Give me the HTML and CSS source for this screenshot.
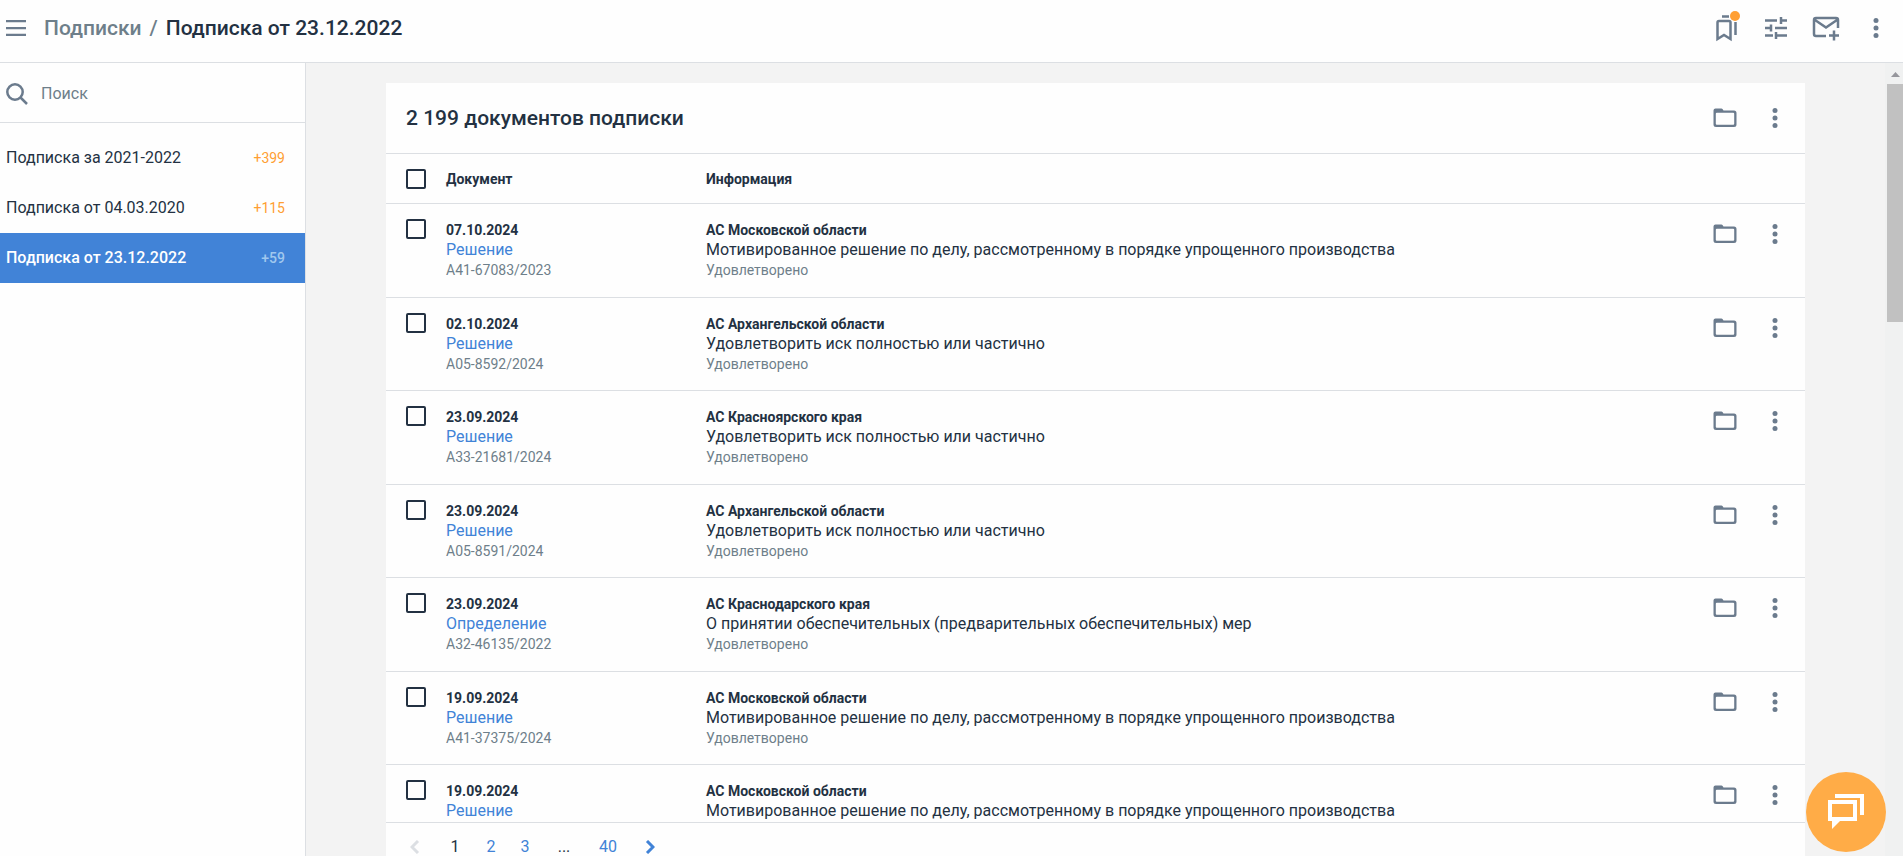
FILE: index.html
```html
<!DOCTYPE html>
<html lang="ru">
<head>
  <meta charset="UTF-8">
  <meta name="viewport" content="width=device-width, initial-scale=1.0">
  <title>Подписка от 23.12.2022</title>
  <link rel="stylesheet" href="styles.css">
</head>
<body>
  <!-- Shared icons -->
  <svg class="sprite" width="0" height="0" aria-hidden="true">
    <symbol id="folder" viewBox="0 0 24 20">
      <path d="M2.500 .5h6q1 0 2 2h10.500a2.500 2.500 0 0 1 2.500 2.500v11.500a2.500 2.500 0 0 1-2.500 2.500H3A2.500 2.500 0 0 1 .5 16.500v-14a2 2 0 0 1 2-2zM2.800 6v9.700q0 1 1 1h16.400q1 0 1-1V5.800q0-1-1-1H3.800q-1 0-1 1z" fill-rule="evenodd"/>
    </symbol>
    <symbol id="dots" viewBox="0 0 6 20">
      <circle cx="3" cy="2.500" r="2.500"/><circle cx="3" cy="10" r="2.500"/><circle cx="3" cy="17.500" r="2.500"/>
    </symbol>
  </svg>

  <header class="topbar">
    <button class="menu-btn" aria-label="Меню">
      <svg width="20" height="16" viewBox="0 0 20 16"><path d="M0 0h20v2.300H0zM0 7h20v2.300H0zM0 13.700h20V16H0z"/></svg>
    </button>
    <nav class="breadcrumbs">
      <a href="#">Подписки</a>
      <span class="slash">/</span>
      <h1>Подписка от 23.12.2022</h1>
    </nav>
    <div class="topbar-actions">
      <button class="icon-btn bookmarks" aria-label="Закладки">
        <svg width="22" height="28" viewBox="0 0 22 28" class="line"><path d="M2.500 8.500q0-1.500 1.500-1.500h10q1.500 0 1.500 1.500v16.500l-6.500-4-6.500 4zM7 2.500h7M20.500 8v13"/></svg>
        <span class="badge"></span>
      </button>
      <button class="icon-btn" aria-label="Настройки">
        <svg width="24" height="24" viewBox="0 0 24 24" class="line"><path d="M1 4.500h12M17 1v7M17 4.500h6M1 12h6M7 8.500v7M11 12h12M1 19.500h8M12 16v7M12 19.500h11"/></svg>
      </button>
      <button class="icon-btn" aria-label="Новая рассылка">
        <svg width="28" height="26" viewBox="0 0 28 26" class="line"><path d="M14 21H4q-2 0-2-2V5q0-2 2-2h20q2 0 2 2v8M3 5l11 7.500L25 5M22 15.500v10M17 20.500h10"/></svg>
      </button>
      <button class="icon-btn" aria-label="Ещё"><svg width="6" height="20"><use href="#dots"/></svg></button>
    </div>
  </header>

  <div class="layout">
    <aside class="sidebar">
      <label class="search">
        <svg width="22" height="22" viewBox="0 0 22 22" class="line"><circle cx="9" cy="9" r="7.700"/><path d="M14.500 14.500L21 21"/></svg>
        <input type="text" placeholder="Поиск" aria-label="Поиск">
      </label>
      <nav class="subs">
        <a href="#" class="sub">Подписка за 2021-2022 <span class="count">+399</span></a>
        <a href="#" class="sub">Подписка от 04.03.2020 <span class="count">+115</span></a>
        <a href="#" class="sub active">Подписка от 23.12.2022 <span class="count">+59</span></a>
      </nav>
    </aside>

    <main class="content">
      <section class="card">
        <div class="card-head">
          <h2>2 199 документов подписки</h2>
          <div class="actions">
            <button class="icon-btn" aria-label="В папку"><svg width="24" height="20"><use href="#folder"/></svg></button>
            <button class="icon-btn" aria-label="Ещё"><svg width="6" height="20"><use href="#dots"/></svg></button>
          </div>
        </div>
        <div class="table-wrap">
          <table class="docs">
            <thead>
              <tr>
                <th class="col-check"><input type="checkbox" aria-label="Выбрать все"></th>
                <th class="col-doc">Документ</th>
                <th>Информация</th>
                <th class="col-actions"></th>
              </tr>
            </thead>
            <tbody id="docs"></tbody>
          </table>
        </div>
        <nav class="pager">
          <button class="arrow" disabled aria-label="Назад"><svg width="10" height="14" viewBox="0 0 10 14"><path d="M8 1L2 7l6 6"/></svg></button>
          <span class="current">1</span>
          <a href="#">2</a>
          <a href="#">3</a>
          <span class="gap">...</span>
          <a href="#" class="last">40</a>
          <button class="arrow" aria-label="Вперёд"><svg width="10" height="14" viewBox="0 0 10 14"><path d="M2 1l6 6-6 6"/></svg></button>
        </nav>
      </section>
    </main>

    <div class="scrollbar" aria-hidden="true">
      <svg width="16" height="20" viewBox="0 0 16 20"><path d="M4 13l4.500-5 4.500 5z"/></svg>
      <div class="thumb"></div>
    </div>
  </div>

  <button class="chat" aria-label="Чат">
    <svg width="36" height="36" viewBox="0 0 36 36"><path d="M0 6h29v21H12l-8 8v-8H0zM4 10v13h21V10zM7 0h29v21h-4V4H7z" fill-rule="evenodd"/></svg>
  </button>

  <script src="script.js"></script>
</body>
</html>
```

FILE: styles.css
```css
:root {
  --text: #233142;
  --muted: #6e7f8a;
  --icon: #6b7b8d;
  --blue: #4183d7;
  --orange: #ff9f33;
  --line: #dcdfe3;
}

* {
  margin: 0;
  padding: 0;
  box-sizing: border-box;
}

body {
  height: 100vh;
  display: flex;
  flex-direction: column;
  overflow: hidden;
  font-family: Roboto, "Liberation Sans", sans-serif;
  font-size: 16px;
  line-height: 20px;
  color: var(--text);
  background: #fefefe;
}

a {
  color: var(--blue);
  text-decoration: none;
}

button {
  border: none;
  background: none;
  cursor: pointer;
}

svg {
  display: block;
  fill: var(--icon);
}

.sprite {
  position: absolute;
}

svg.line {
  fill: none;
  stroke: var(--icon);
  stroke-width: 2.5;
}

/* Top bar */
.topbar {
  display: flex;
  align-items: center;
  height: 63px;
  padding: 0 2px 6px 6px;
  border-bottom: 1px solid var(--line);
}

.breadcrumbs {
  display: flex;
  gap: 8px;
  margin-left: 18px;
  font-size: 21px;
  font-weight: 500;
  line-height: 24px;
}

.breadcrumbs a,
.slash {
  color: var(--muted);
}

.breadcrumbs h1 {
  font-size: 21px;
  font-weight: 500;
}

.topbar-actions,
.actions {
  display: flex;
  margin-left: auto;
}

.icon-btn {
  display: flex;
  align-items: center;
  justify-content: center;
  width: 50px;
  height: 40px;
}

.bookmarks {
  position: relative;
}

.badge {
  position: absolute;
  top: 3px;
  right: 11px;
  width: 10px;
  height: 10px;
  border-radius: 50%;
  background: var(--orange);
}

.layout {
  flex: 1;
  display: flex;
  min-height: 0;
}

/* Sidebar */
.sidebar {
  width: 306px;
  border-right: 1px solid var(--line);
}

.search {
  display: flex;
  align-items: center;
  gap: 13px;
  height: 60px;
  padding: 2px 6px 0;
  border-bottom: 1px solid var(--line);
}

.search input {
  flex: 1;
  min-width: 0;
  border: none;
  outline: none;
  background: none;
  font: inherit;
}

.search input::placeholder {
  color: var(--muted);
}

.subs {
  padding-top: 10px;
}

.sub {
  display: flex;
  align-items: baseline;
  justify-content: space-between;
  height: 50px;
  padding: 15px 20px 0 6px;
  color: var(--text);
}

.count {
  font-size: 14px;
  color: var(--orange);
}

.sub.active {
  background: var(--blue);
  color: #fff;
  font-weight: 500;
}

.active .count {
  color: #a0c8ee;
}

/* Documents */
.content {
  flex: 1;
  min-width: 0;
  padding: 20px 80px 0;
  background: #f3f3f3;
}

.card {
  display: flex;
  flex-direction: column;
  height: 100%;
  background: #fefefe;
}

.card-head {
  display: flex;
  align-items: center;
  height: 71px;
  padding: 0 5px 0 20px;
  border-bottom: 1px solid var(--line);
}

.card-head h2 {
  font-size: 21px;
  font-weight: 500;
}

.table-wrap {
  flex: 1;
  min-height: 0;
  overflow: hidden;
}

.docs {
  width: 100%;
  border-collapse: separate;
  border-spacing: 0;
  table-layout: fixed;
}

.docs th,
.docs td {
  border-bottom: 1px solid var(--line);
  text-align: left;
  vertical-align: top;
}

.docs th {
  height: 50px;
  vertical-align: middle;
  font-size: 14px;
  font-weight: 700;
}

.docs td {
  height: 94px;
  padding-top: 16px;
}

.docs tr:nth-child(even) td {
  height: 93px;
}

.docs .col-check {
  width: 60px;
  padding-left: 20px;
}

.docs td.col-check {
  padding-top: 15px;
}

.col-doc {
  width: 260px;
}

.docs .col-actions {
  width: 105px;
  padding-right: 5px;
}

.docs td.col-actions {
  padding-top: 10px;
}

.docs td strong,
.docs td small,
.docs td .title {
  display: block;
}

.docs td strong {
  font-size: 14px;
}

.docs td small {
  font-size: 14px;
  color: var(--muted);
}

input[type="checkbox"] {
  display: block;
  appearance: none;
  width: 20px;
  height: 20px;
  border: 2px solid var(--text);
  border-radius: 2px;
}

/* Pagination */
.pager {
  display: flex;
  align-items: center;
  flex-shrink: 0;
  height: 34px;
  padding: 14px 24px 0;
  border-top: 1px solid var(--line);
  overflow: hidden;
}

.pager a,
.pager span {
  width: 34px;
  text-align: center;
}

.pager .current {
  margin-left: 16px;
  width: 38px;
}

.pager .gap {
  width: 44px;
}

.pager .last {
  width: 44px;
}

.arrow svg {
  fill: none;
  stroke: var(--blue);
  stroke-width: 3;
}

.arrow:disabled svg {
  stroke: var(--line);
}

.pager .last + .arrow {
  margin-left: 15px;
}

/* Scrollbar */
.scrollbar {
  width: 18px;
  padding: 1px 0 0 2px;
  background: #f0f1f1;
}

.scrollbar svg {
  fill: #96969c;
}

.thumb {
  height: 30%;
  background: #c1c1c1;
}

.chat {
  position: fixed;
  right: 17px;
  bottom: 4px;
  display: flex;
  align-items: center;
  justify-content: center;
  width: 80px;
  height: 80px;
  border-radius: 50%;
  background: #ffac47;
}

.chat svg {
  fill: #fff;
}
```

FILE: script.js
```js
const upheld = 'Удовлетворено';
const reasoned = 'Мотивированное решение по делу, рассмотренному в порядке упрощенного производства';
const partial = 'Удовлетворить иск полностью или частично';

const docs = [
  ['07.10.2024', 'Решение', 'А41-67083/2023', 'АС Московской области', reasoned],
  ['02.10.2024', 'Решение', 'А05-8592/2024', 'АС Архангельской области', partial],
  ['23.09.2024', 'Решение', 'А33-21681/2024', 'АС Красноярского края', partial],
  ['23.09.2024', 'Решение', 'А05-8591/2024', 'АС Архангельской области', partial],
  ['23.09.2024', 'Определение', 'А32-46135/2022', 'АС Краснодарского края', 'О принятии обеспечительных (предварительных обеспечительных) мер'],
  ['19.09.2024', 'Решение', 'А41-37375/2024', 'АС Московской области', reasoned],
  ['19.09.2024', 'Решение', '', 'АС Московской области', reasoned]
];

document.getElementById('docs').innerHTML = docs.map(([date, type, number, court, title]) => `
  <tr>
    <td class="col-check"><input type="checkbox" aria-label="${type} ${date}"></td>
    <td><strong>${date}</strong><a href="#" class="title">${type}</a><small>${number}</small></td>
    <td><strong>${court}</strong><span class="title">${title}</span><small>${number ? upheld : ''}</small></td>
    <td class="col-actions">
      <div class="actions">
        <button class="icon-btn" aria-label="В папку"><svg width="24" height="20"><use href="#folder"/></svg></button>
        <button class="icon-btn" aria-label="Ещё"><svg width="6" height="20"><use href="#dots"/></svg></button>
      </div>
    </td>
  </tr>`).join('');
```
